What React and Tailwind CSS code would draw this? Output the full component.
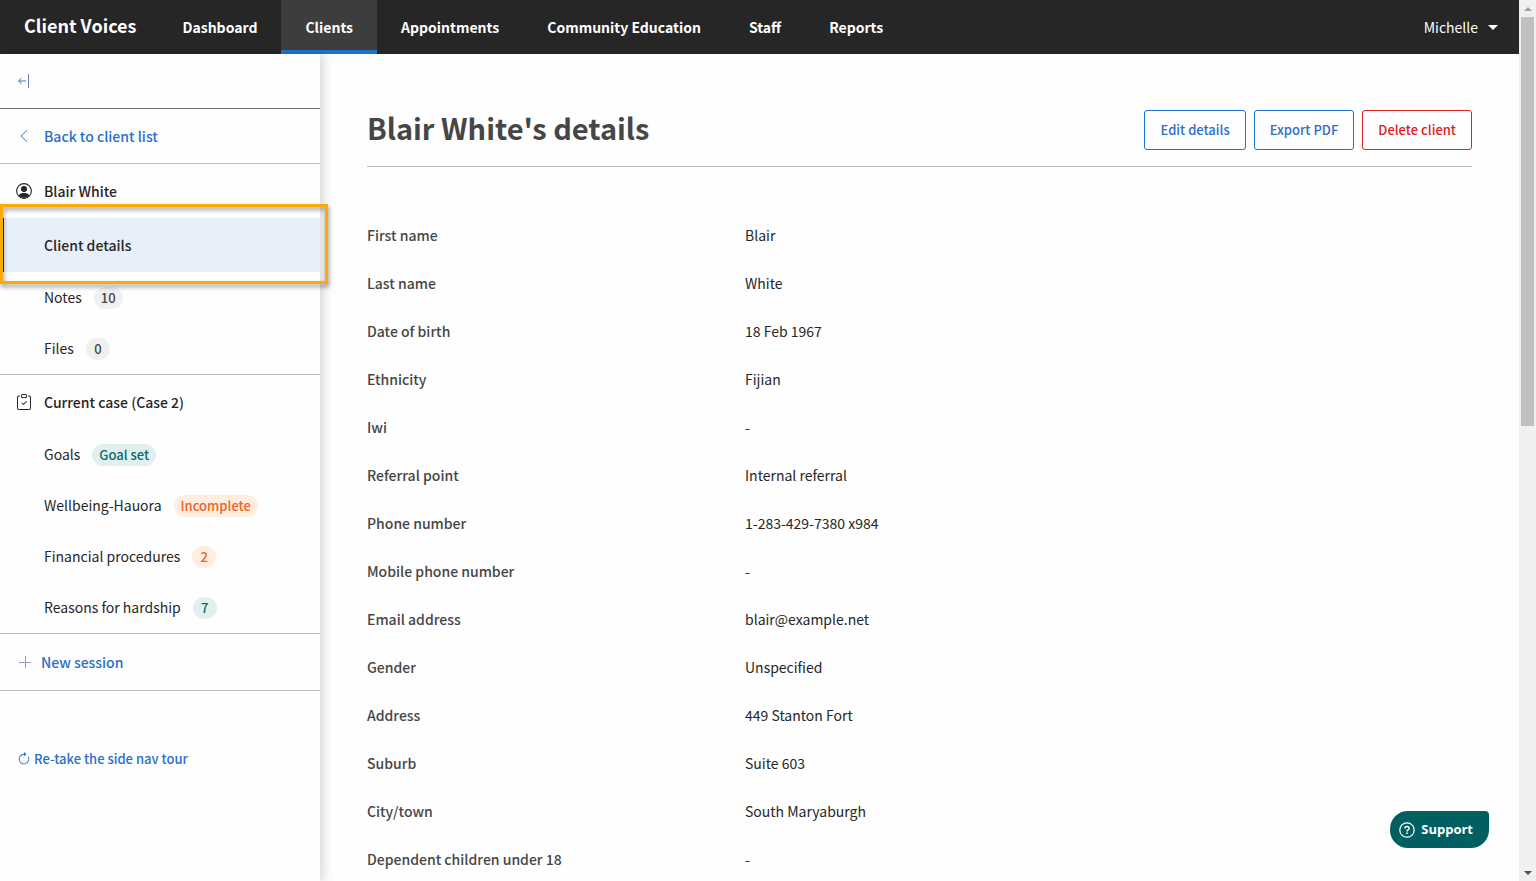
import React from "react";
import { BsArrowClockwise, BsClipboardCheck } from "react-icons/bs";

const navItems = [
  "Dashboard",
  "Clients",
  "Appointments",
  "Community Education",
  "Staff",
  "Reports",
];

const details = [
  ["First name", "Blair"],
  ["Last name", "White"],
  ["Date of birth", "18 Feb 1967"],
  ["Ethnicity", "Fijian"],
  ["Iwi", "-"],
  ["Referral point", "Internal referral"],
  ["Phone number", "1-283-429-7380 x984"],
  ["Mobile phone number", "-"],
  ["Email address", "blair@example.net"],
  ["Gender", "Unspecified"],
  ["Address", "449 Stanton Fort"],
  ["Suburb", "Suite 603"],
  ["City/town", "South Maryaburgh"],
  ["Dependent children under 18", "-"],
];

const badgeTones = {
  gray: "bg-[#f0f0f0] text-[#464646]",
  teal: "bg-[#e1f0ee] text-[#0b6b6b]",
  orange: "bg-[#ffeddf] text-[#ec6426]",
};

const Header = () => {
  return (
    <header className="flex h-[54px] shrink-0 items-stretch bg-[#262626] text-white">
      <a href="#" className="flex items-center pr-[22px] pb-1 pl-6 text-[18px] font-bold">
        Client Voices
      </a>
      <nav className="flex">
        {navItems.map((item) => (
          <a
            key={item}
            href="#"
            className={`flex items-center border-b-4 px-6 pt-1 text-[14px] font-bold ${
              item === "Clients"
                ? "border-[#1f73cf] bg-[#3d3d3d]"
                : "border-transparent"
            }`}
          >
            {item}
          </a>
        ))}
      </nav>
      <button className="ml-auto flex items-center gap-[10px] pr-[21px] text-[14px] font-normal">
        Michelle
        <svg width="10" height="5" viewBox="0 0 10 5" fill="currentColor">
          <path d="M0 0h10L5 5z" />
        </svg>
      </button>
    </header>
  );
};

const SideItem = ({ label, badge, tone }) => {
  return (
    <li>
      <a href="#" className="flex h-[51px] items-center gap-3 pl-11 text-[14px]">
        {label}
        <span
          className={`flex h-[22px] min-w-6 items-center justify-center rounded-full px-[7px] text-[13px] font-medium ${badgeTones[tone]}`}
        >
          {badge}
        </span>
      </a>
    </li>
  );
};

const Sidebar = () => {
  return (
    <aside className="relative z-10 w-[320px] shrink-0 bg-[#fefefe] text-[#262626] shadow-[4px_0_10px_rgba(0,0,0,0.15)]">
      <div className="flex h-[55px] items-center border-b border-[#767676] pl-[18px]">
        <button aria-label="Collapse side nav" className="text-[#2a6cc8]">
          <svg width="12" height="14" viewBox="0 0 12 14" fill="none" stroke="currentColor">
            <path d="M8 7H.7M3.7 3.8L.6 7l3.1 3.2" strokeWidth="0.9" />
            <path d="M10.5 0v14" stroke="#7f72cf" />
          </svg>
        </button>
      </div>
      <a
        href="#"
        className="flex h-[55px] items-center gap-4 border-b border-[#bdbdbd] pl-5 text-[14px] font-medium text-[#2a6fc9]"
      >
        <svg width="8" height="14" viewBox="0 0 8 14" fill="none" stroke="currentColor">
          <path d="M7.3 1L1 7l6.3 6" strokeWidth="0.9" />
        </svg>
        Back to client list
      </a>

      <div className="relative border-b border-[#bdbdbd]">
        <div className="flex h-[54px] items-center gap-3 pl-4 text-[14px] font-medium">
          <svg width="16" height="16" viewBox="0 0 16 16">
            <circle cx="8" cy="8" r="7.4" fill="none" stroke="#262626" strokeWidth="1.1" />
            <circle cx="8" cy="6" r="3" fill="#262626" />
            <path d="M2.5 12.3C4 10.6 5.8 10 8 10s4 .6 5.5 2.3A7 7 0 0 1 8 15a7 7 0 0 1-5.5-2.7z" fill="#262626" />
          </svg>
          Blair White
        </div>
        <a
          href="#"
          className="flex h-[54px] items-center border-l-4 border-[#262626] bg-[#e7f0fa] pl-10 text-[14px] font-medium"
        >
          Client details
        </a>
        <ul>
          <SideItem label="Notes" badge="10" tone="gray" />
          <SideItem label="Files" badge="0" tone="gray" />
        </ul>
        {/* tour highlight around the active item */}
        <div className="pointer-events-none absolute top-[40px] -right-2 left-0 h-[80px] border-3 border-[#fbab08] drop-shadow-[1px_3px_2px_rgba(0,0,0,0.4)]" />
      </div>

      <div className="border-b border-[#bdbdbd]">
        <div className="flex h-[54px] items-center gap-3 pl-4 text-[14px] font-medium">
          <BsClipboardCheck size={16} />
          Current case (Case 2)
        </div>
        <ul>
          <SideItem label="Goals" badge="Goal set" tone="teal" />
          <SideItem label="Wellbeing-Hauora" badge="Incomplete" tone="orange" />
          <SideItem label="Financial procedures" badge="2" tone="orange" />
          <SideItem label="Reasons for hardship" badge="7" tone="teal" />
        </ul>
      </div>

      <a
        href="#"
        className="flex h-[57px] items-center gap-[10px] border-b border-[#bdbdbd] pl-[19px] text-[14px] font-medium text-[#2a6fc9]"
      >
        <svg width="12" height="12" viewBox="0 0 12 12" fill="none" stroke="#8f9dce">
          <path d="M6.5 0v12M0 6.5h12" />
        </svg>
        New session
      </a>
      <button className="mt-[58px] flex items-center gap-[3px] pl-[17px] text-[13px] leading-5 font-medium text-[#2a6fc9]">
        <BsArrowClockwise size={14} />
        Re-take the side nav tour
      </button>
    </aside>
  );
};

const ClientDetails = () => {
  return (
    <main className="min-w-0 flex-1 px-[47px] pt-14">
      <div className="flex items-start justify-between border-b border-[#bdbdbd] pb-4">
        <h1 className="text-[29px] leading-[34px] font-bold text-[#464646]">
          Blair White's details
        </h1>
        <div className="flex gap-2 text-[13px] font-medium">
          <button className="h-10 rounded-[3px] border border-[#1f73cf] px-[15px] text-[#2a6fc9]">
            Edit details
          </button>
          <button className="h-10 rounded-[3px] border border-[#1f73cf] px-[15px] text-[#2a6fc9]">
            Export PDF
          </button>
          <button className="h-10 rounded-[3px] border border-[#e0201f] px-[15px] text-[#e0201f]">
            Delete client
          </button>
        </div>
      </div>
      <dl className="mt-11 text-[14px]">
        {details.map(([label, value]) => (
          <div key={label} className="flex h-12 items-center">
            <dt className="w-[378px] shrink-0 font-medium text-[#464646]">{label}</dt>
            <dd className="text-[#262626]">{value}</dd>
          </div>
        ))}
      </dl>
    </main>
  );
};

const Scrollbar = () => {
  return (
    <div className="flex w-[17px] shrink-0 flex-col items-center bg-[#f0f0f0]">
      <div className="flex h-[17px] items-center">
        <svg width="8" height="4" viewBox="0 0 8 4" fill="#a0a0a0">
          <path d="M0 4h8L4 0z" />
        </svg>
      </div>
      <div className="h-[409px] w-[13px] bg-[#c0c0c0]" />
      <div className="mt-auto flex h-[17px] items-center">
        <svg width="8" height="4" viewBox="0 0 8 4" fill="#505050">
          <path d="M0 0h8L4 4z" />
        </svg>
      </div>
    </div>
  );
};

const App = () => {
  return (
    <div className="flex h-screen overflow-hidden bg-[#fefefe] font-['Noto_Sans_CJK_SC',sans-serif]">
      <div className="relative flex min-w-0 flex-1 flex-col overflow-hidden">
        <Header />
        <div className="flex min-h-0 flex-1">
          <Sidebar />
          <ClientDetails />
        </div>
        <button className="absolute right-[30px] bottom-[33px] z-20 flex h-[37px] items-center gap-[6px] rounded-[18px] rounded-tr-[4px] bg-[#005f61] pr-4 pl-[9px] font-['Open_Sans',sans-serif] text-[13px] font-bold text-white">
          <svg width="16" height="16" viewBox="0 0 16 16" fill="none" stroke="currentColor" strokeWidth="1.2">
            <circle cx="8" cy="8" r="7.2" />
            <path d="M5.9 6.4C5.9 5.1 6.8 4.4 8 4.4s2.1.8 2.1 1.9c0 1.5-2.1 1.6-2.1 3.1" strokeWidth="1.5" />
            <path d="M8 10.6v1.5" strokeWidth="1.6" />
          </svg>
          Support
        </button>
      </div>
      <Scrollbar />
    </div>
  );
};

export default App;
